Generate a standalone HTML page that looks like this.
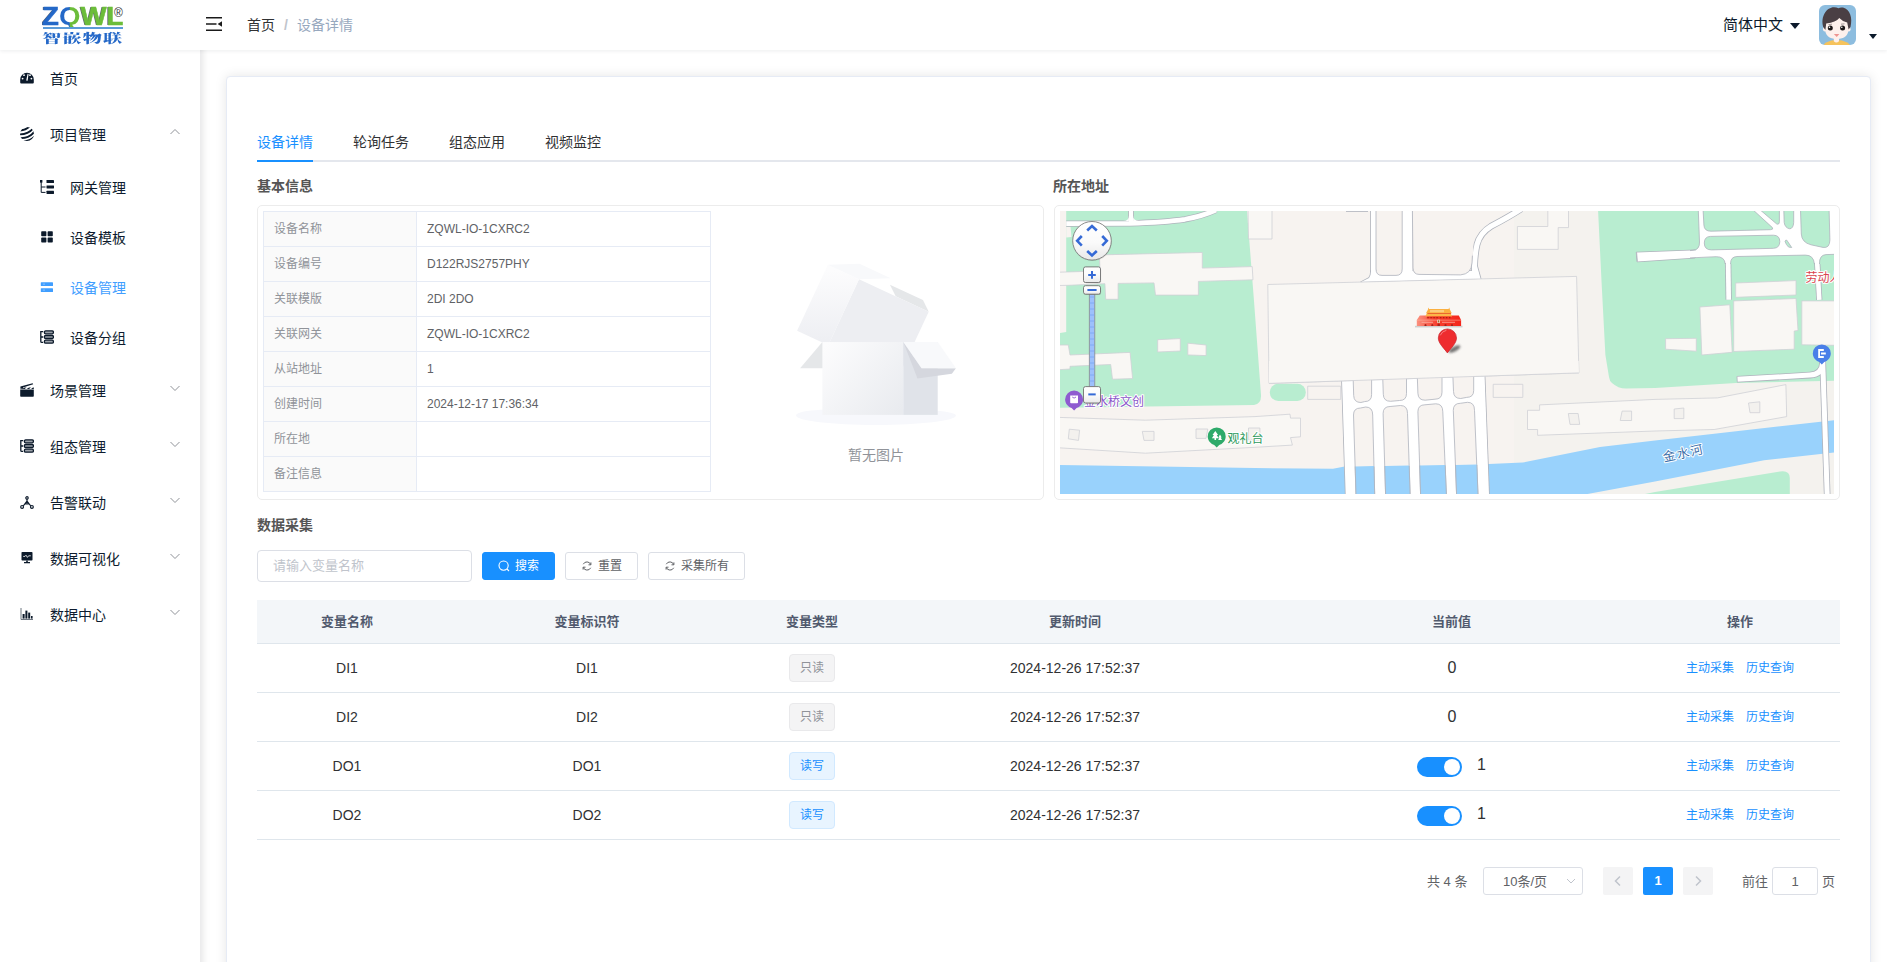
<!DOCTYPE html>
<html lang="zh-CN">
<head>
<meta charset="utf-8">
<title>设备详情</title>
<style>
*{box-sizing:border-box;margin:0;padding:0}
html,body{width:1887px;height:962px;overflow:hidden;background:#fff}
body{font-family:"Liberation Sans","Noto Sans CJK SC",sans-serif;font-size:14px;color:#303133;position:relative}
.abs{position:absolute}
/* sidebar */
#sidebar{position:absolute;left:0;top:0;width:200px;height:1000px;background:#fff;box-shadow:2px 0 8px rgba(0,10,20,.12);z-index:5}
#logo{position:absolute;left:0;top:0;width:200px;height:50px;background:#fff;z-index:8}
#hdr{position:absolute;left:0;top:0;width:1887px;height:50px;background:#fff;box-shadow:0 1px 4px rgba(0,21,41,.08);z-index:6}
.mi{position:absolute;left:0;width:200px;height:56px;line-height:56px;font-size:14px;color:#0d1b2e}
.mi .ic{position:absolute;left:20px;top:20px;width:16px;height:16px}
.mi .tx{position:absolute;left:50px;top:1px}
.mi .ar{position:absolute;left:168.500px;top:19.800px;width:12px;height:12px}
.sm{position:absolute;left:0;width:200px;height:50px;line-height:50px;font-size:14px;color:#0d1b2e}
.sm .ic{position:absolute;left:40px;top:17px;width:16px;height:16px}
.sm .tx{position:absolute;left:70px;top:1px}
.sm.act{color:#409eff}
/* header */
#navbar{position:absolute;left:200px;top:0;width:1687px;height:50px;z-index:7}
/* card */
#card{position:absolute;left:226px;top:76px;width:1645px;height:1000px;background:#fff;border:1px solid #e6ebf5;border-radius:4px;box-shadow:0 0 12px rgba(0,0,0,.10)}

.tab{position:absolute;top:121px;height:40px;line-height:43px;font-size:14px;color:#303133;white-space:nowrap}
.sec{position:absolute;font-size:14px;font-weight:bold;color:#555;line-height:20px;white-space:nowrap}
.panel{position:absolute;border:1px solid #ececec;border-radius:5px;background:#fff}
.dt{position:absolute;left:263px;top:211px;width:448px;border-collapse:collapse;font-size:12px;table-layout:fixed}
.dt td{border:1px solid #e6ebf5;height:35px;padding:0 10px;line-height:16px;color:#606266;white-space:nowrap}
.dt td.l{width:153px;background:#fafafa;color:#909399}

.btn{position:absolute;top:552px;height:28px;border-radius:3px;font-size:12px;line-height:28px;white-space:nowrap;border:1px solid #dcdfe6;color:#606266;background:#fff}
.btn svg{position:absolute;top:7px}
.btn span{position:absolute;top:-1px}
.th{position:absolute;top:600px;height:43px;line-height:44px;font-size:13px;font-weight:bold;color:#515a6e;text-align:center;white-space:nowrap}
.td{position:absolute;height:49px;line-height:51px;font-size:14px;color:#303133;text-align:center;white-space:nowrap}
.hl{position:absolute;left:257px;width:1583px;height:1px;background:#dfe6ec}
.tag{position:absolute;left:789px;width:46px;height:28px;border-radius:4px;font-size:12px;line-height:27px;text-align:center;border:1px solid #e9e9eb;background:#f4f4f5;color:#909399}
.tag.p{border-color:#d1e9ff;background:#e8f4ff;color:#1890ff}
.lk{position:absolute;font-size:12px;color:#1890ff;line-height:20px;white-space:nowrap}
.sw{position:absolute;left:1417px;width:45px;height:20px;border-radius:10px;background:#1890ff}
.sw i{position:absolute;right:2px;top:2px;width:16px;height:16px;border-radius:8px;background:#fff}
.v{position:absolute;font-size:16px;line-height:20px;color:#303133;white-space:nowrap}

.pg{position:absolute;top:867px;height:28px;line-height:29px;font-size:13px;color:#606266;white-space:nowrap}
.pb{position:absolute;top:867px;width:30px;height:28px;border-radius:2px;background:#f4f4f5}
</style>
</head>
<body>
<div id="hdr"></div>
<div id="navbar">
<svg class="abs" style="left:6px;top:17px" width="16" height="14" viewBox="0 0 16 14"><path d="M0 .8H16M0 7H10.500M0 13.200H16" stroke="#1a1a1a" stroke-width="1.600" fill="none"/><path d="M16 4.200V9.800L11.600 7Z" fill="#1a1a1a"/></svg>
<div class="abs" style="left:47px;top:0;line-height:50px;font-size:14px;color:#303133;white-space:nowrap">首页<span style="color:#c0c4cc;margin:0 9px 0 9px;font-weight:bold">/</span><span style="color:#97a8be">设备详情</span></div>
<div class="abs" style="left:1523px;top:0;line-height:49px;font-size:15px;color:#0c1a2b;white-space:nowrap">简体中文</div>
<div class="abs" style="left:1590px;top:23px;width:0;height:0;border:5px solid transparent;border-top:6px solid #0c1a2b;border-bottom:0"></div>
<svg class="abs" style="left:1619px;top:5px" width="37" height="40" viewBox="0 0 37 40"><defs><clipPath id="avc"><rect width="37" height="40" rx="6"/></clipPath></defs><g clip-path="url(#avc)"><rect width="37" height="40" fill="#8dbddf"/><ellipse cx="17.700" cy="42.500" rx="14" ry="7.600" fill="#f6c35c"/><path d="M14.800 31H20V36.200Q17.400 39 14.800 36.200Z" fill="#fdf0ec"/><ellipse cx="5.800" cy="24.200" rx="1.800" ry="2.400" fill="#fdf0ec"/><ellipse cx="29.800" cy="24.200" rx="1.800" ry="2.400" fill="#fdf0ec"/><path d="M6 17Q6 11 17.800 11Q29.600 11 29.600 17V23Q29.600 34 17.800 34Q6 34 6 23Z" fill="#fdf0ec"/><path d="M4.200 22C1.200 11 8 2.200 15 2.300Q17.500 2.300 19.500 3.200Q21.500 2 24 2.600C31 4.500 33.800 13 31.500 22L29.600 24.500L28.200 17.600Q23.500 16.500 20.300 13Q17 17.500 7.200 18.400L6.400 25Z" fill="#4a3f44"/><circle cx="11.300" cy="23.100" r="2.500" fill="#1c1718"/><circle cx="23.600" cy="23.100" r="2.500" fill="#1c1718"/><circle cx="10.500" cy="22.300" r=".8" fill="#fff"/><circle cx="22.800" cy="22.300" r=".8" fill="#fff"/><path d="M9.500 19.600L13 19.200M22 19.200L25.500 18.800" stroke="#4a3f44" stroke-width=".5"/><path d="M14.900 29.100H20.400L17.700 32Z" fill="#ee9490"/></g></svg>
<div class="abs" style="left:1669px;top:33.500px;width:0;height:0;border:4px solid transparent;border-top:5px solid #0c1a2b;border-bottom:0"></div>
</div>
<div id="sidebar">
<div class="mi" style="top:50px"><svg class="ic" viewBox="0 0 14 14" style="left:20px;top:20px;width:14px;height:14px"><path d="M0.2 9.5A6.8 6.8 0 0 1 13.8 9.5V12.4A1 1 0 0 1 12.8 13.4H1.2A1 1 0 0 1 0.2 12.4Z" fill="#0c1a2b"/><circle cx="2.6" cy="8.6" r=".9" fill="#fff"/><circle cx="4" cy="5.2" r=".9" fill="#fff"/><circle cx="10" cy="5.2" r=".9" fill="#fff"/><circle cx="11.4" cy="8.6" r=".9" fill="#fff"/><path d="M7.6 3.8L8.6 4.1L7.6 10.8L6.2 10.6Z" fill="#fff"/></svg><span class="tx">首页</span></div>
<div class="mi" style="top:106px"><svg class="ic" viewBox="0 0 14 14" style="left:20px;top:21px;width:14px;height:14px"><defs><clipPath id="gl"><circle cx="7" cy="7" r="7"/></clipPath></defs><g clip-path="url(#gl)" stroke="#0c1a2b" stroke-width="1.9" fill="none"><path d="M-2 3.5Q6 4 11 -2"/><path d="M-2 7.3Q8 8 14 0.5"/><path d="M-1 11Q9 12 15 4"/><path d="M2 14.3Q10 15 16 8"/></g></svg><span class="tx">项目管理</span><svg class="ar" viewBox="0 0 12 12"><path d="M1.5 8L6 3.5L10.5 8" fill="none" stroke="#909399" stroke-width="1"/></svg></div>
<div class="sm" style="top:162px"><svg class="ic" viewBox="0 0 14 14" style="top:18px;width:14px;height:14px"><g fill="#0c1a2b"><rect x="0" y="0" width="2.4" height="2.6"/><rect x="6.5" y="0" width="7.5" height="3.1" rx=".4"/><rect x="6.5" y="5.4" width="7.5" height="3.1" rx=".4"/><rect x="6.5" y="10.8" width="7.5" height="3.1" rx=".4"/></g><path d="M1.2 2V12.4H5.5M1.2 7H5.5" fill="none" stroke="#0c1a2b" stroke-width="1"/></svg><span class="tx">网关管理</span></div>
<div class="sm" style="top:212px"><svg class="ic" viewBox="0 0 14 14" style="top:18px;width:14px;height:14px"><g fill="#0c1a2b"><rect x="1.2" y="1.3" width="5.2" height="5" rx=".8"/><rect x="7.6" y="1.3" width="5.2" height="5" rx=".8"/><rect x="1.2" y="7.6" width="5.2" height="5" rx=".8"/><rect x="7.6" y="7.6" width="5.2" height="5" rx=".8"/></g></svg><span class="tx">设备模板</span></div>
<div class="sm act" style="top:262px"><svg class="ic" viewBox="0 0 14 14" style="top:18px;width:14px;height:14px"><g fill="#409eff"><rect x=".8" y="2.2" width="12.2" height="3.9" rx=".6"/><rect x=".8" y="8.2" width="12.2" height="3.9" rx=".6"/></g><rect x="2.8" y="3.6" width="2.2" height="1" fill="#8cc5ff"/><rect x="2.8" y="9.6" width="2.2" height="1" fill="#8cc5ff"/></svg><span class="tx">设备管理</span></div>
<div class="sm" style="top:312px"><svg class="ic" viewBox="0 0 14 14" style="top:18px;width:14px;height:14px"><g fill="#9aa0a8" stroke="#0c1a2b" stroke-width="1.300"><rect x="4.400" y=".8" width="9" height="3" rx="1.300"/><rect x="4.400" y="5.500" width="9" height="3" rx="1.300"/><rect x="4.400" y="10.200" width="9" height="3" rx="1.300"/><path d="M3.200 1.600H.8V11.400Q.8 12.400 1.800 12.400H3.200M.8 7H3.200" fill="none" stroke-width="1.300"/></g></svg><span class="tx">设备分组</span></div>
<div class="mi" style="top:362px"><svg class="ic" viewBox="0 0 14 14" style="left:20px;top:21px;width:14px;height:14px"><path d="M.2 6.6H13.8V13Q13.8 13.8 13 13.8H1Q.2 13.8 .2 13Z" fill="#0c1a2b"/><path d="M.4 5.8V3.6L12.6 .2L13.2 1.2L3 4.4V5.8Z" fill="#0c1a2b"/><path d="M2 5.9L4.6 4.6H6.6L4.6 5.9ZM6.6 5.9L9 4.6H11L9 5.9ZM11 5.9L13 4.6H13.8V5.9Z" fill="#0c1a2b"/></svg><span class="tx">场景管理</span><svg class="ar" viewBox="0 0 12 12"><path d="M1.5 4L6 8.5L10.5 4" fill="none" stroke="#909399" stroke-width="1"/></svg></div>
<div class="mi" style="top:418px"><svg class="ic" viewBox="0 0 14 14" style="left:20px;top:21px;width:14px;height:14px"><g fill="#9aa0a8" stroke="#0c1a2b" stroke-width="1.300"><rect x="4.400" y=".8" width="9" height="3" rx="1.300"/><rect x="4.400" y="5.500" width="9" height="3" rx="1.300"/><rect x="4.400" y="10.200" width="9" height="3" rx="1.300"/><path d="M3.200 1.600H.8V11.400Q.8 12.400 1.800 12.400H3.200M.8 7H3.200" fill="none" stroke-width="1.300"/></g></svg><span class="tx">组态管理</span><svg class="ar" viewBox="0 0 12 12"><path d="M1.5 4L6 8.5L10.5 4" fill="none" stroke="#909399" stroke-width="1"/></svg></div>
<div class="mi" style="top:474px"><svg class="ic" viewBox="0 0 14 14" style="left:20px;top:21.500px;width:14px;height:14px"><g fill="none" stroke="#0c1a2b" stroke-width="1.200"><path d="M7 3V5.200L3.200 10M7 5.200L10.800 10M5 7.800H9"/></g><g fill="#fff" stroke="#0c1a2b" stroke-width="1.200"><circle cx="7" cy="1.900" r="1.200"/><circle cx="2.100" cy="10.900" r="1.400"/><circle cx="11.900" cy="10.900" r="1.400"/></g></svg><span class="tx">告警联动</span><svg class="ar" viewBox="0 0 12 12"><path d="M1.5 4L6 8.5L10.5 4" fill="none" stroke="#909399" stroke-width="1"/></svg></div>
<div class="mi" style="top:530px"><svg class="ic" viewBox="0 0 14 14" style="left:20px;top:21px;width:14px;height:14px"><rect x="1.5" y="1" width="11" height="8.6" rx=".8" fill="#0c1a2b"/><path d="M6.2 9.6H7.8V11H10V12.2H4V11H6.2Z" fill="#0c1a2b"/><path d="M3.2 5.4H5L6 4.2L7.4 6.4L8.6 4.8H10.8" fill="none" stroke="#fff" stroke-width=".8"/></svg><span class="tx">数据可视化</span><svg class="ar" viewBox="0 0 12 12"><path d="M1.5 4L6 8.5L10.5 4" fill="none" stroke="#909399" stroke-width="1"/></svg></div>
<div class="mi" style="top:586px"><svg class="ic" viewBox="0 0 14 14" style="left:20px;top:21px;width:14px;height:14px"><path d="M1 1V12.5H13" fill="none" stroke="#5c6673" stroke-width=".9"/><g fill="#0c1a2b"><rect x="2.6" y="7" width="2" height="4.6"/><rect x="5.4" y="3.6" width="2" height="8"/><rect x="8.2" y="5.6" width="2" height="6"/><rect x="11" y="9" width="1.6" height="2.6"/></g></svg><span class="tx">数据中心</span><svg class="ar" viewBox="0 0 12 12"><path d="M1.5 4L6 8.5L10.5 4" fill="none" stroke="#909399" stroke-width="1"/></svg></div>
</div>
<div id="logo">
<div class="abs" style="left:41.600px;top:2px;height:24.500px;overflow:hidden;font-weight:bold;font-size:25px;line-height:28px;white-space:nowrap;transform:scaleX(1.105);transform-origin:0 0;-webkit-text-stroke:.5px"><span style="color:#2468c8;-webkit-text-stroke-color:#2468c8;text-shadow:-.8px .3px 0 rgba(15,25,40,.7)">Z</span><span style="background:linear-gradient(90deg,#2468c8 0,#2468c8 49%,#6cbd3a 51%);-webkit-background-clip:text;background-clip:text;color:transparent;-webkit-text-stroke:0">Q</span><span style="color:#6cbd3a;-webkit-text-stroke-color:#6cbd3a;text-shadow:-.8px .3px 0 rgba(15,25,40,.7)">WL</span></div>
<div class="abs" style="left:114px;top:6.500px;font-size:12px;line-height:12px;color:#333;font-weight:normal">®</div>
<div class="abs" style="left:43px;top:27px;width:80px;height:2px;background:#5b9bd8"></div>
<div class="abs" style="left:41.600px;top:28.800px;font-family:'Noto Serif CJK SC',serif;font-weight:900;font-size:12px;line-height:17px;letter-spacing:.7px;color:#2468c8;white-space:nowrap;transform:scaleX(1.600);transform-origin:0 0">智嵌物联</div>
</div>
<div id="card"></div>
<div class="abs" style="left:257px;top:159.500px;width:1583px;height:2px;background:#e4e7ed"></div>
<div class="abs" style="left:257px;top:159.500px;width:56px;height:2px;background:#1890ff"></div>
<div class="tab" style="left:257px;color:#1890ff">设备详情</div>
<div class="tab" style="left:353px">轮询任务</div>
<div class="tab" style="left:449px">组态应用</div>
<div class="tab" style="left:545px">视频监控</div>
<div class="sec" style="left:257px;top:176px">基本信息</div>
<div class="sec" style="left:1053px;top:176px">所在地址</div>
<div class="panel" style="left:257px;top:205px;width:787px;height:295px"></div>
<div class="panel" style="left:1054px;top:205px;width:786px;height:295px"></div>
<table class="dt">
<tr><td class="l">设备名称</td><td>ZQWL-IO-1CXRC2</td></tr>
<tr><td class="l">设备编号</td><td>D122RJS2757PHY</td></tr>
<tr><td class="l">关联模版</td><td>2DI 2DO</td></tr>
<tr><td class="l">关联网关</td><td>ZQWL-IO-1CXRC2</td></tr>
<tr><td class="l">从站地址</td><td>1</td></tr>
<tr><td class="l">创建时间</td><td>2024-12-17 17:36:34</td></tr>
<tr><td class="l">所在地</td><td></td></tr>
<tr><td class="l">备注信息</td><td></td></tr>
</table>
<svg class="abs" style="left:796px;top:251px" width="160" height="174" viewBox="0 0 79 86"><defs><linearGradient id="lg1" x1="38.85%" y1="0%" x2="61.15%" y2="100%"><stop stop-color="#fcfcfd" offset="0%"/><stop stop-color="#eeeff3" offset="100%"/></linearGradient><linearGradient id="lg2" x1="0%" y1="9.5%" x2="100%" y2="90.5%"><stop stop-color="#fcfcfd" offset="0%"/><stop stop-color="#e9ebef" offset="100%"/></linearGradient></defs><g fill="none" fill-rule="evenodd"><path d="M39.5,86 C61.3152476,86 79,83.9106622 79,81.3333333 C79,78.7560045 57.3152476,78 35.5,78 C13.6847524,78 0,78.7560045 0,81.3333333 C0,83.9106622 17.6847524,86 39.5,86 Z" fill="#f7f8fc"/><polygon fill="#e5e7e9" transform="translate(27.5,51.5) scale(1,-1) translate(-27.5,-51.5)" points="13 58 53 58 42 45 2 45"/><g transform="translate(34.5,31.5) scale(-1,1) rotate(-25) translate(-34.5,-31.5) translate(7,10)"><polygon fill="#e5e7e9" transform="translate(11.5,5) scale(1,-1) translate(-11.5,-5)" points="0 3 18 3 23 7 5 7"/><polygon fill="#edeef2" points="0 7 38 7 38 43 0 43"/><rect fill="url(#lg1)" transform="translate(46.5,25) scale(-1,1) translate(-46.5,-25)" x="38" y="7" width="17" height="36"/><polygon fill="#f8f9fb" transform="translate(39.5,3.5) scale(-1,1) translate(-39.5,-3.5)" points="24 7 41 7 55 0 38 0"/></g><rect fill="url(#lg2)" x="13" y="45" width="40" height="36"/><g transform="translate(53,45)"><rect fill="#e0e3e9" x="0" y="0" width="17" height="36"/><polygon fill="#d5d7de" points="0 0 7 18 24 15.700 26 13 9 13"/></g><polygon fill="#f8f9fb" transform="translate(66,51.5) scale(-1,1) translate(-66,-51.5)" points="62 45 79 45 70 58 53 58"/></g></svg>
<div class="abs" style="left:776px;top:445px;width:200px;text-align:center;font-size:14px;line-height:20px;color:#909399">暂无图片</div>

<!--MAPS--><svg class="abs" style="left:1060px;top:211px" width="774" height="283" viewBox="0 0 774 283" font-family="'Liberation Sans','Noto Sans CJK SC',sans-serif">
<defs><clipPath id="mclip"><rect width="774" height="283"/></clipPath><linearGradient id="cg" x1="0" y1="0" x2="0" y2="1"><stop offset="0" stop-color="#fff"/><stop offset=".5" stop-color="#fbfbfb"/><stop offset="1" stop-color="#e9e9e9"/></linearGradient><linearGradient id="pg" x1="0" y1="0" x2="0" y2="1"><stop offset="0" stop-color="#fff"/><stop offset=".55" stop-color="#fafafa"/><stop offset="1" stop-color="#e8e8e8"/></linearGradient></defs>
<g clip-path="url(#mclip)">
<rect width="774" height="283" fill="#f7f3f0"/>
<rect x="454" width="320" height="283" fill="#f4f2ee"/>
<path d="M0,253.9 L195,257 L273,257.8 L284.6,255.5 L429,253.1 L462.8,251.6 L540,236 L595,229.4 L774,209.2 L774,241.4 L704.1,249.2 L595,270.6 L527.5,283 L0,284Z" fill="#99d2fc"/>
<path d="M6.2,0 L187,0 L194,90 L201,184 Q201.5,193 194,194 L0,196.7 L0,122 L6.2,121Z" fill="#b8edd0"/>
<path d="M6.2,15.5 L10.5,15.5 L11.5,26 L6.2,26.500Z" fill="#f7f3f0"/>
<path d="M538.1,0 L774,0 L774,169.700 L676,172 L595,177 L566,177.500 Q558,177.500 552,172 Q549.500,170 549,166 L545.400,144 L541.500,70Z" fill="#b8edd0"/>
<path d="M585,283 L595,281 L720,260.500 Q729.800,259 729.800,267 L729.800,284Z" fill="#b8edd0"/>
<rect x="209.800" y="172.800" width="36" height="17.200" rx="8.500" fill="#b8edd0"/>
<g>
<path d="M6.200,12.700 L70,12.300 Q105,11.200 125,8.300 Q142,5.300 156,-1" fill="none" stroke="#afb3bc" stroke-width="6.300000000000001"/>
<path d="M71,-1 L71,12" fill="none" stroke="#afb3bc" stroke-width="5.800000000000001"/>
<path d="M313.500,-1 L313.500,64" fill="none" stroke="#afb3bc" stroke-width="6.6"/>
<path d="M347,-1 L347,64" fill="none" stroke="#afb3bc" stroke-width="12.5"/>
<path d="M461,-2 C452,4 441,10 431,15.300 C424,19.500 419,26 417,33.500 C415.500,40 414.700,48 414.500,55 L414.500,66" fill="none" stroke="#afb3bc" stroke-width="6.800000000000001"/>
<path d="M668.100,48 L668.700,88.800" fill="none" stroke="#afb3bc" stroke-width="6.300000000000001"/>
<path d="M757,48 L759.300,88.800" fill="none" stroke="#afb3bc" stroke-width="6.199999999999999"/>
<path d="M677,168.300 L750,164.100 Q762,163.500 762.600,152 L762.600,134" fill="none" stroke="#afb3bc" stroke-width="6.6"/>
<path d="M762.700,150 L767.200,284" fill="none" stroke="#afb3bc" stroke-width="6.6"/>
<path d="M301,71.100 L309,67 Q311,64.500 311,60 L417,60 L417.100,55 L420.700,67.900Z" fill="#afb3bc" stroke="#afb3bc" stroke-width="1.600" stroke-linejoin="round"/>
<path d="M576.600,41.500 L630,39.600 L637,39.300 L637,46.500 L630,46.900 L577.400,50.400Z" fill="#afb3bc" stroke="#afb3bc" stroke-width="1.600" stroke-linejoin="round"/>
<path d="M282,169.900 L424.600,165.100 L429,283 L285.700,284Z" fill="#afb3bc" stroke="#afb3bc" stroke-width="1.600" stroke-linejoin="round"/>
<path d="M6.200,12.700 L70,12.300 Q105,11.200 125,8.300 Q142,5.300 156,-1" fill="none" stroke="#fff" stroke-width="4.7"/>
<path d="M71,-1 L71,12" fill="none" stroke="#fff" stroke-width="4.2"/>
<path d="M313.500,-1 L313.500,64" fill="none" stroke="#fff" stroke-width="5"/>
<path d="M347,-1 L347,64" fill="none" stroke="#fff" stroke-width="10.9"/>
<path d="M461,-2 C452,4 441,10 431,15.300 C424,19.500 419,26 417,33.500 C415.500,40 414.700,48 414.500,55 L414.500,66" fill="none" stroke="#fff" stroke-width="5.2"/>
<path d="M668.100,48 L668.700,88.800" fill="none" stroke="#fff" stroke-width="4.7"/>
<path d="M757,48 L759.300,88.800" fill="none" stroke="#fff" stroke-width="4.6"/>
<path d="M677,168.300 L750,164.100 Q762,163.500 762.600,152 L762.600,134" fill="none" stroke="#fff" stroke-width="5"/>
<path d="M762.700,150 L767.200,284" fill="none" stroke="#fff" stroke-width="5"/>
<path d="M301,71.100 L309,67 Q311,64.500 311,60 L417,60 L417.100,55 L420.700,67.900Z" fill="#fff"/>
<path d="M576.600,41.500 L630,39.600 L637,39.300 L637,46.500 L630,46.900 L577.400,50.400Z" fill="#fff"/>
<path d="M282,169.900 L424.600,165.100 L429,283 L285.700,284Z" fill="#fff"/>
</g>
<path d="M63,10.100 L68.900,10 L68.900,4.500 Q68.900,10 63,10.100Z M79,9.900 L73.100,10 L73.100,4.500 Q73.100,9.900 79,9.900Z" fill="#fff"/>
<path d="M576.600,41.500 L577.400,50.400" stroke="#afb3bc" stroke-width=".800"/>
<path d="M677,165.700 L677.300,170.900" stroke="#afb3bc" stroke-width=".800"/>
<rect x="636" y="-1" width="140" height="53" fill="#fff"/>
<path d="M635,-1 L638.300,-1 L639.500,31 Q639.800,38.800 634,39.400 L635,39.600Z" fill="#b8edd0"/>
<path d="M638.300,-1 L639.500,31 Q639.800,38.600 633,39.300 L630,39.600" fill="none" stroke="#afb3bc" stroke-width=".800" stroke-linejoin="round"/>
<path d="M635,47 L656.200,45.700 Q664.800,45.600 665.200,53 L635,53Z" fill="#b8edd0"/>
<path d="M630,46.900 L656.200,45.700 Q664.800,45.600 665.200,53" fill="none" stroke="#afb3bc" stroke-width=".800" stroke-linejoin="round"/>
<path d="M670.600,53 Q670.300,45.800 677,45.500 L745.300,44.100 Q753.600,44 754.400,53Z" fill="#b8edd0"/>
<path d="M670.600,53 Q670.300,45.800 677,45.500 L745.300,44.100 Q753.600,44 754.400,53" fill="none" stroke="#afb3bc" stroke-width=".800" stroke-linejoin="round"/>
<path d="M759.500,53 Q759.200,44 766,43.600 L775,43.300 L775,53Z" fill="#b8edd0"/>
<path d="M759.500,53 Q759.200,44 766,43.600 L775,43.300" fill="none" stroke="#afb3bc" stroke-width=".800" stroke-linejoin="round"/>
<path d="M643.100,-1 L693.200,-1 L712.400,16.600 Q713.800,18.500 710.500,18.700 L651,20.200 Q644.200,20.300 643.900,14Z" fill="#b8edd0" stroke="#afb3bc" stroke-width=".800" stroke-linejoin="round"/>
<path d="M650.500,25.400 L713.500,24.200 Q719.800,24.300 719.800,30.600 Q719.800,37 713.500,37.300 L651.500,38.900 Q644.300,38.900 644.300,32 Q644.300,25.600 650.500,25.400Z" fill="#b8edd0" stroke="#afb3bc" stroke-width=".800" stroke-linejoin="round"/>
<path d="M700.300,-1 L719.400,-1 L719.400,10.500 Q719.200,14.300 716.500,12.800Z" fill="#b8edd0" stroke="#afb3bc" stroke-width=".800" stroke-linejoin="round"/>
<path d="M723.800,-1 L733.700,-1 L733.700,11.500 Q733.300,17.500 729.800,17.800 Q725,17 724.200,11.500Z" fill="#b8edd0" stroke="#afb3bc" stroke-width=".800" stroke-linejoin="round"/>
<path d="M740.500,-1 L769.100,-1 L769.900,29 Q769.700,37.500 763,36.400 L751,33.800 Q741.800,31.500 741.300,23Z" fill="#b8edd0" stroke="#afb3bc" stroke-width=".800" stroke-linejoin="round"/>
<path d="M725,30.200 Q725.600,28.800 726.800,29.200 L731.700,36.500 L728.600,36.100 Q725.800,33.500 725,30.200Z" fill="#b8edd0" stroke="#afb3bc" stroke-width=".800" stroke-linejoin="round"/>
<path d="M316,-1 L316,58 Q316,64.400 322,64.400 L336,64.400 Q342.200,64.400 342.200,58 L342.200,-1Z" fill="#f7f3f0" stroke="#afb3bc" stroke-width=".800"/>
<path d="M352.400,-1 L352.400,57 Q352.400,63.400 359,63.400 L400.500,63.900 Q411.500,63 412,52 L413.400,38 L413.400,60 L413,-1Z" fill="#f7f3f0" stroke="none"/>
<path d="M352.400,-1 L353,57 Q353.500,63.400 359,63.400 L400.500,63.900 Q411.500,63 412,52 L412.400,44.700" fill="none" stroke="#afb3bc" stroke-width=".800"/>
<path d="M286,0.500 L308,0.500" stroke="#afb3bc" stroke-width=".800"/>
<path d="M207.800,73.500 L516.600,65.400 L518.900,161.900 L209,172.400Z" fill="#f9f7f4" stroke="#cfd0d6" stroke-width=".800" stroke-linejoin="round"/>
<path d="M188,-1 L212,-1 L212,28 L188.500,28Z" fill="#f9f7f4" stroke="#cfd0d6" stroke-width=".800" stroke-linejoin="round"/>
<path d="M457.400,15.500 L487.800,15.500 L487.800,-1 L508.500,-1 L508.500,16.600 L498.200,16.600 L498.200,38.400 L457.400,38.400Z" fill="#f9f7f4" stroke="#cfd0d6" stroke-width=".800" stroke-linejoin="round"/>
<path d="M39.400,43.900 L142.300,41.500 L142.300,57.100 L192.200,55.600 L193,68.800 L138.400,70.400 L138.400,84.100 L95.500,84.100 L94,71.900 L58.100,72.400 L58.100,88.300 L45.700,88.300 L44.900,72.700 L8.300,74.300 L-1,74.500 L-1,61.200 L40,60Z" fill="#f9f7f4" stroke="#cfd0d6" stroke-width=".800" stroke-linejoin="round"/>
<path d="M-1,134 L8.300,134 L10,144 L70.100,141.400 L72.600,167.600 L52.500,168.200 L50.700,153.500 L10,155.300 L10,158 L-1,158.700Z" fill="#f9f7f4" stroke="#cfd0d6" stroke-width=".800" stroke-linejoin="round"/>
<path d="M97.700,128.700 L120.300,127.600 L120.300,140 L97.700,141Z" fill="#f9f7f4" stroke="#cfd0d6" stroke-width=".800" stroke-linejoin="round"/>
<path d="M127.800,132.200 L146.100,134 L146.100,144.600 L127.800,143.900Z" fill="#f9f7f4" stroke="#cfd0d6" stroke-width=".800" stroke-linejoin="round"/>
<path d="M675.700,72 L736,69.600 L736,84 L675.700,86.300Z" fill="#f9f7f4" stroke="#cfd0d6" stroke-width=".800" stroke-linejoin="round"/>
<path d="M673.700,89.900 L736,87.500 L738,119.500 L734.200,120 L734.200,138.200 L673.700,140.500Z" fill="#f9f7f4" stroke="#cfd0d6" stroke-width=".800" stroke-linejoin="round"/>
<path d="M639.900,96 L669.800,93.800 L672.200,141.300 L641.800,144Z" fill="#f9f7f4" stroke="#cfd0d6" stroke-width=".800" stroke-linejoin="round"/>
<path d="M605.600,127.700 L636.300,127.300 L636.300,140.200 L605.600,138.200Z" fill="#f9f7f4" stroke="#cfd0d6" stroke-width=".800" stroke-linejoin="round"/>
<path d="M741.800,89.900 L775,89.900 L775,134.300 L741.800,133.800Z" fill="#f9f7f4" stroke="#cfd0d6" stroke-width=".800" stroke-linejoin="round"/>
<path d="M247.700,175.200 L280.700,175.200 L280.700,188.400 L247.700,188.400Z" fill="#f7f3f0" stroke="#cfd0d6" stroke-width=".800" stroke-linejoin="round"/>
<path d="M433.200,173.300 L462.800,173.300 L462.800,186.400 L433.200,186.400Z" fill="#f7f3f0" stroke="#cfd0d6" stroke-width=".800" stroke-linejoin="round"/>
<path d="M-1,206.400 L85.400,209.200 L195,205.600 L230,203.200 L230.500,207.100 L240.500,207.100 L240.500,225.800 L230.500,226.600 L232.400,234.100 L195,236.300 L85.400,242.200 L-1,236.800Z" fill="#f9f7f4" stroke="#cfd0d6" stroke-width=".800" stroke-linejoin="round"/>
<path d="M9.300,218.200 L19.600,219.200 L18.500,229.400 L8.300,227.800Z" fill="#f3f1ee" stroke="#cfd0d6" stroke-width=".800"/>
<path d="M82.300,220.400 L94,220.400 L94,229.400 L84,229.400Z" fill="#f3f1ee" stroke="#cfd0d6" stroke-width=".800"/>
<path d="M136,218 L147.800,218 L146,227.400 L136,227.400Z" fill="#f3f1ee" stroke="#cfd0d6" stroke-width=".800"/>
<path d="M188.500,217 L199.900,217 L199.900,229 L188.500,229Z" fill="#f3f1ee" stroke="#cfd0d6" stroke-width=".800"/>
<path d="M467.500,199.300 L479.600,199.300 L479.600,193.900 L595,188.400 L657.400,186.900 L725.900,173.600 L726.700,205.600 L654.200,218.500 L595,220 L477.600,224.300 L477.600,218.500 L467.500,218.500Z" fill="#f9f7f4" stroke="#cfd0d6" stroke-width=".800" stroke-linejoin="round"/>
<path d="M508.300,202.500 L518.100,202.500 L519.700,213.400 L510,213.400Z" fill="#f3f1ee" stroke="#cfd0d6" stroke-width=".800"/>
<path d="M562.100,200.100 L571.600,200.100 L571.600,209.500 L560.200,209.500Z" fill="#f3f1ee" stroke="#cfd0d6" stroke-width=".800"/>
<path d="M614.200,198 L623.800,197 L623.800,207.600 L614.200,207.600Z" fill="#f3f1ee" stroke="#cfd0d6" stroke-width=".800"/>
<path d="M688.500,192 L699.800,190.800 L699.800,201.700 L690,201.700Z" fill="#f3f1ee" stroke="#cfd0d6" stroke-width=".800"/>
<path d="M292.9,160 L293.7,184.5 Q293.9,191.5 300.9,191.5 L304.6,190.6 Q311.6,190.6 311.6,183.6 L311.6,160Z" fill="#f7f3f0" stroke="#afb3bc" stroke-width=".800"/>
<path d="M322.5,160 L323.3,183.3 Q323.5,190.3 330.5,190.3 L339.5,189.5 Q346.5,189.5 346.5,182.5 L346.5,160Z" fill="#f7f3f0" stroke="#afb3bc" stroke-width=".800"/>
<path d="M357.1,160 L357.90000000000003,182.2 Q358.1,189.2 365.1,189.2 L375,188.2 Q382,188.2 382,181.2 L382,160Z" fill="#f7f3f0" stroke="#afb3bc" stroke-width=".800"/>
<path d="M392.7,160 L393.5,180.5 Q393.7,187.5 400.7,187.5 L406.7,186.4 Q413.7,186.4 413.7,179.4 L413.7,160Z" fill="#f7f3f0" stroke="#afb3bc" stroke-width=".800"/>
<path d="M296,284 L293.5,204 Q293.5,197 300.5,197 L305.7,196 Q312.7,196 312.7,204 L314.7,284Z" fill="#f7f3f0" stroke="#afb3bc" stroke-width=".800"/>
<path d="M295.2,255.5 L314.0,255.0 L314.7,284 L296,284Z" fill="#99d2fc"/>
<path d="M295.2,255.5 L296,284 M314.0,255.5 L314.7,284" fill="none" stroke="#afb3bc" stroke-width=".800"/>
<path d="M325.6,284 L323.1,202.5 Q323.1,195.5 330.1,195.5 L340.5,194.5 Q347.5,194.5 347.5,202.5 L350.1,284Z" fill="#f7f3f0" stroke="#afb3bc" stroke-width=".800"/>
<path d="M324.8,255 L349.2,254.5 L350.1,284 L325.6,284Z" fill="#99d2fc"/>
<path d="M324.8,255 L325.6,284 M349.2,255 L350.1,284" fill="none" stroke="#afb3bc" stroke-width=".800"/>
<path d="M360.6,284 L357.9,200.8 Q357.9,193.8 364.9,193.8 L375.8,192.8 Q382.8,192.8 382.8,200.8 L386.4,284Z" fill="#f7f3f0" stroke="#afb3bc" stroke-width=".800"/>
<path d="M359.7,254.4 L385.2,253.9 L386.4,284 L360.6,284Z" fill="#99d2fc"/>
<path d="M359.7,254.4 L360.6,284 M385.2,254.4 L386.4,284" fill="none" stroke="#afb3bc" stroke-width=".800"/>
<path d="M396.6,284 L393.3,199.3 Q393.3,192.3 400.3,192.3 L407.5,191.3 Q414.5,191.3 414.5,199.3 L418,284Z" fill="#f7f3f0" stroke="#afb3bc" stroke-width=".800"/>
<path d="M395.5,253.9 L416.9,253.4 L418,284 L396.6,284Z" fill="#99d2fc"/>
<path d="M395.5,253.9 L396.6,284 M416.9,253.9 L418,284" fill="none" stroke="#afb3bc" stroke-width=".800"/>
<path d="M209,172.400 L518.900,161.900 L518.600,150 L209,150Z" fill="#f9f7f4"/>
<path d="M209,172.400 L518.900,161.900" stroke="#cfd0d6" stroke-width=".800"/>
<text x="23.900" y="194.800" font-size="12" fill="#8a56c9" stroke="#fff" stroke-width="2" paint-order="stroke" stroke-linejoin="round">金水桥文创</text>
<text x="167.500" y="231.800" font-size="12" fill="#2e9a5c" stroke="#fff" stroke-width="2" paint-order="stroke" stroke-linejoin="round">观礼台</text>
<text x="745.400" y="70.500" font-size="12" fill="#d9434e" stroke="#fff" stroke-width="2" paint-order="stroke" stroke-linejoin="round">劳动人民文化宫</text>
<text x="0" y="0" font-size="12.500" fill="#3a6ea8" letter-spacing="1.400" text-anchor="middle" transform="translate(624.500,246.500) rotate(-12)" stroke="#fff" stroke-width="2" paint-order="stroke" stroke-linejoin="round">金水河</text>
<g><path d="M14.100,179.500 a9,9 0 0 1 9,9 c0,4.500 -3.500,7.500 -6.500,8.600 l-2.500,2.400 l-2.500,-2.400 c-3,-1.100 -6.500,-4.100 -6.500,-8.600 a9,9 0 0 1 9,-9z" fill="#8e5bd0"/><path d="M10.200,184.500 h7.800 v7 q0,.8 -.8,.8 h-6.200 q-.8,0 -.8,-.8z" fill="#fff"/><path d="M12.200,186 q1.900,2.200 3.800,0" fill="none" stroke="#8e5bd0" stroke-width=".900"/></g>
<g><path d="M156.700,216.400 a9,9 0 0 1 9,9 c0,4.500 -3.500,7.500 -6.500,8.600 l-2.500,2.600 l-2.500,-2.600 c-3,-1.100 -6.500,-4.100 -6.500,-8.600 a9,9 0 0 1 9,-9z" fill="#2eaa6a"/><path d="M155.300,220 l2.800,4 h-1.400 l2,3.200 h-2.600 v1.800 h-1.600 v-1.800 h-2.600 l2,-3.200 h-1.400z M160,223.500 l1.700,3 h-1 l1.300,2.500 h-3.800 l1.200,-2.500 h-1z" fill="#fff"/></g>
<g><path d="M761.800,133.400 a9,9 0 0 1 9,9 c0,4.500 -3.500,7.500 -6.500,8.600 l-2.500,2.600 l-2.500,-2.600 c-3,-1.100 -6.500,-4.100 -6.500,-8.600 a9,9 0 0 1 9,-9z" fill="#4a7fe8"/><path d="M758.200,138 h5.600 v2 h-3.800 v5 h3.800 v2 h-5.600z" fill="#fff"/><path d="M761,141.500 h4.800 v2 h-4.800z" fill="#fff"/></g>
<defs><linearGradient id="tg" x1="0" y1="0" x2="1" y2="0"><stop offset="0" stop-color="#fb917e"/><stop offset=".45" stop-color="#f6402f"/><stop offset="1" stop-color="#f4251a"/></linearGradient><filter id="blur1" x="-50%" y="-50%" width="200%" height="200%"><feGaussianBlur stdDeviation="1.1"/></filter></defs>
<g><rect x="355" y="114.800" width="47.500" height="1.600" fill="#bdbdbd" opacity=".7"/><path d="M356.800,108.900 L359.800,104.400 H398.800 L401.100,108.900 V115.100 H356.800Z" fill="url(#tg)"/><path d="M356.800,108.700 H401.100 V109.600 H356.800Z" fill="#fdb9a5" opacity=".7"/><path d="M365.300,105.600 L367,102 H390.500 L392,105.600Z" fill="#fbb649"/><path d="M366,102.300 L368.200,98 H389.600 L391.800,102.300Z" fill="#fbb040"/><path d="M368,97.900 l.5,-1.300 l.6,1.300z M388.600,97.900 l.6,-1.300 l.5,1.300z" fill="#fbb040"/><path d="M370,99 H384 V101.300 H370Z" fill="#fdd48a" opacity=".8"/><path d="M367.500,102.100 H391 V102.900 H367.500Z" fill="#e8542a"/><path d="M366.800,105.600 H390.800 V107.400 H366.800Z" fill="#f1331f"/><path d="M367.500,106 h1.200 v1.300 h-1.200z m3,0 h1.200 v1.300 h-1.200z m3,0 h1.200 v1.300 h-1.200z m3,0 h1.200 v1.300 h-1.200z m3.600,0 h1.200 v1.300 h-1.200z m3,0 h1.200 v1.300 h-1.200z m3,0 h1.200 v1.300 h-1.200z m3,0 h1.200 v1.300 h-1.200z" fill="#a31d14"/><rect x="377.300" y="108.700" width="2.500" height="3.300" fill="#e9e2d0"/><rect x="378" y="109.300" width="1.100" height="2.100" fill="#9c6a2c"/><path d="M361.500,110.700 H373 V112 H361.500Z M382,110.700 H395 V112 H382Z" fill="#fcc0b0" opacity=".55"/><path d="M364.500,115.100 v-1.400 q1,-1.400 2,0 v1.400z M371.300,115.100 v-1.400 q1,-1.400 2,0 v1.400z M377.500,115.100 v-1.800 q1.200,-1.500 2.400,0 v1.800z M384.500,115.100 v-1.400 q1,-1.400 2,0 v1.400z M391,115.100 v-1.400 q1,-1.400 2,0 v1.400z" fill="#a8231a"/></g>
<g><ellipse cx="394.500" cy="138" rx="6.500" ry="2.600" transform="rotate(-28 394.500 138)" fill="#4a4a4a" opacity=".75" filter="url(#blur1)"/><path d="M387.400,117.900 a9.100,9.100 0 0 1 9.100,9.100 c0,5 -5,9.500 -9.100,14.900 c-4.100,-5.400 -9.100,-9.900 -9.100,-14.900 a9.100,9.100 0 0 1 9.100,-9.100z" fill="#ee2c2f" stroke="#c7232b" stroke-width=".700"/><path d="M380.400,124 a7.600,7.600 0 0 1 5.600,-4.600" fill="none" stroke="#f7a0a0" stroke-width=".700" stroke-linecap="round"/></g>
<g>
<circle cx="32.300" cy="30.600" r="19.500" fill="#000" opacity=".12"/>
<circle cx="32" cy="29.800" r="19.300" fill="url(#pg)" stroke="#7d7d7d" stroke-width=".900"/>
<g fill="none" stroke="#356ad6" stroke-width="2.600" stroke-linejoin="miter"><path d="M27.200,19.500 L32,15 L36.800,19.500"/><path d="M27.200,40 L32,44.500 L36.800,40"/><path d="M21.800,25 L17.200,29.800 L21.800,34.600"/><path d="M42.200,25 L46.800,29.800 L42.200,34.600"/></g>
<rect x="29.300" y="83" width="5.500" height="93" fill="#9dc0fc" stroke="#8a8a8a" stroke-width=".800"/>
<path d="M29.700,86 H34.400 M29.700,92 H34.400 M29.700,98 H34.400 M29.700,104 H34.400 M29.700,110 H34.400 M29.700,116 H34.400 M29.700,122 H34.400 M29.700,128 H34.400 M29.700,134 H34.400 M29.700,140 H34.400 M29.700,146 H34.400 M29.700,152 H34.400 M29.700,158 H34.400 M29.700,164 H34.400 M29.700,170 H34.400" stroke="#78a4f4" stroke-width=".800"/>
<rect x="24.1" y="56.699999999999996" width="17" height="15.6" rx="2" fill="#000" opacity=".18"/>
<rect x="23.5" y="55.9" width="17" height="15.6" rx="2" fill="url(#cg)" stroke="#707070" stroke-width=".900"/>
<path d="M28.200,63.900 H35.800 M32,60.100 V67.700" stroke="#356ad6" stroke-width="2"/>
<rect x="24.1" y="75.5" width="17" height="8.5" rx="2" fill="#000" opacity=".18"/>
<rect x="23.5" y="74.7" width="17" height="8.5" rx="2" fill="url(#cg)" stroke="#707070" stroke-width=".900"/>
<path d="M27.400,79 H36.600" stroke="#356ad6" stroke-width="2"/>
<rect x="24.1" y="176.4" width="17" height="16.4" rx="2" fill="#000" opacity=".18"/>
<rect x="23.5" y="175.6" width="17" height="16.4" rx="2" fill="url(#cg)" stroke="#707070" stroke-width=".900"/>
<path d="M28.300,183.400 H35.700" stroke="#356ad6" stroke-width="2"/>
</g>
</g></svg><!--MAPE-->
<div class="sec" style="left:257px;top:515px">数据采集</div>
<div class="abs" style="left:257px;top:550px;width:215px;height:32px;border:1px solid #dcdfe6;border-radius:4px;background:#fff;font-size:13px;line-height:30px;color:#c0c4cc;padding-left:15px;white-space:nowrap">请输入变量名称</div>
<div class="btn" style="left:482px;width:73px;background:#1890ff;border-color:#1890ff;color:#fff"><svg style="left:15px" width="12" height="12" viewBox="0 0 12 12"><circle cx="5.600" cy="5.600" r="4.600" fill="none" stroke="#fff" stroke-width="1.100"/><path d="M9 9L11 11" stroke="#fff" stroke-width="1.100"/></svg><span style="left:32px">搜索</span></div>
<div class="btn" style="left:565px;width:73px"><svg style="left:15px" width="12" height="12" viewBox="0 0 12 12"><path d="M2.300 4.200A4 4 0 0 1 9.700 4.600M9.700 7.800A4 4 0 0 1 2.300 7.400" fill="none" stroke="#606266" stroke-width="1"/><path d="M9.900 2.400V4.800H7.500M2.100 9.600V7.200H4.500" fill="none" stroke="#606266" stroke-width="1"/></svg><span style="left:32px">重置</span></div>
<div class="btn" style="left:648px;width:97px"><svg style="left:15px" width="12" height="12" viewBox="0 0 12 12"><path d="M2.300 4.200A4 4 0 0 1 9.700 4.600M9.700 7.800A4 4 0 0 1 2.300 7.400" fill="none" stroke="#606266" stroke-width="1"/><path d="M9.900 2.400V4.800H7.500M2.100 9.600V7.200H4.500" fill="none" stroke="#606266" stroke-width="1"/></svg><span style="left:32px">采集所有</span></div>
<div class="abs" style="left:257px;top:600px;width:1583px;height:43px;background:#f3f6f9"></div>
<div class="hl" style="top:643px"></div>
<div class="th" style="left:257px;width:180px">变量名称</div>
<div class="th" style="left:437px;width:300px">变量标识符</div>
<div class="th" style="left:737px;width:150px">变量类型</div>
<div class="th" style="left:887px;width:376px">更新时间</div>
<div class="th" style="left:1263px;width:377px">当前值</div>
<div class="th" style="left:1640px;width:200px">操作</div>
<div class="td" style="left:257px;top:643px;width:180px">DI1</div>
<div class="td" style="left:437px;top:643px;width:300px">DI1</div>
<div class="tag" style="top:654px">只读</div>
<div class="v" style="left:1402px;width:100px;text-align:center;top:658px">0</div>
<div class="td" style="left:887px;top:643px;width:376px">2024-12-26 17:52:37</div>
<div class="lk" style="left:1686px;top:658px">主动采集</div>
<div class="lk" style="left:1746px;top:658px">历史查询</div>
<div class="hl" style="top:692px"></div>
<div class="td" style="left:257px;top:692px;width:180px">DI2</div>
<div class="td" style="left:437px;top:692px;width:300px">DI2</div>
<div class="tag" style="top:703px">只读</div>
<div class="v" style="left:1402px;width:100px;text-align:center;top:707px">0</div>
<div class="td" style="left:887px;top:692px;width:376px">2024-12-26 17:52:37</div>
<div class="lk" style="left:1686px;top:707px">主动采集</div>
<div class="lk" style="left:1746px;top:707px">历史查询</div>
<div class="hl" style="top:741px"></div>
<div class="td" style="left:257px;top:741px;width:180px">DO1</div>
<div class="td" style="left:437px;top:741px;width:300px">DO1</div>
<div class="tag p" style="top:752px">读写</div>
<div class="sw" style="top:757px"><i></i></div>
<div class="v" style="left:1477px;top:755px">1</div>
<div class="td" style="left:887px;top:741px;width:376px">2024-12-26 17:52:37</div>
<div class="lk" style="left:1686px;top:756px">主动采集</div>
<div class="lk" style="left:1746px;top:756px">历史查询</div>
<div class="hl" style="top:790px"></div>
<div class="td" style="left:257px;top:790px;width:180px">DO2</div>
<div class="td" style="left:437px;top:790px;width:300px">DO2</div>
<div class="tag p" style="top:801px">读写</div>
<div class="sw" style="top:806px"><i></i></div>
<div class="v" style="left:1477px;top:804px">1</div>
<div class="td" style="left:887px;top:790px;width:376px">2024-12-26 17:52:37</div>
<div class="lk" style="left:1686px;top:805px">主动采集</div>
<div class="lk" style="left:1746px;top:805px">历史查询</div>
<div class="hl" style="top:839px"></div>
<div class="pg" style="left:1427px">共 4 条</div>
<div class="pg" style="left:1483px;width:100px;border:1px solid #dcdfe6;border-radius:3px;line-height:27px;padding-left:19px">10条/页<svg style="position:absolute;left:82px;top:8px" width="10" height="10" viewBox="0 0 10 10"><path d="M1 3L5 7L9 3" fill="none" stroke="#c0c4cc" stroke-width="1"/></svg></div>
<div class="pb" style="left:1603px"><svg style="position:absolute;left:10px;top:8px" width="10" height="12" viewBox="0 0 10 12"><path d="M7 1.500L2.500 6L7 10.500" fill="none" stroke="#c0c4cc" stroke-width="1.500"/></svg></div>
<div class="pb" style="left:1643px;background:#1890ff;color:#fff;font-weight:bold;font-size:13px;line-height:28px;text-align:center">1</div>
<div class="pb" style="left:1683px"><svg style="position:absolute;left:10px;top:8px" width="10" height="12" viewBox="0 0 10 12"><path d="M3 1.500L7.500 6L3 10.500" fill="none" stroke="#c0c4cc" stroke-width="1.500"/></svg></div>
<div class="pg" style="left:1742px">前往</div>
<div class="pg" style="left:1772px;width:46px;border:1px solid #dcdfe6;border-radius:3px;line-height:27px;text-align:center">1</div>
<div class="pg" style="left:1822px">页</div>


</body>
</html>
